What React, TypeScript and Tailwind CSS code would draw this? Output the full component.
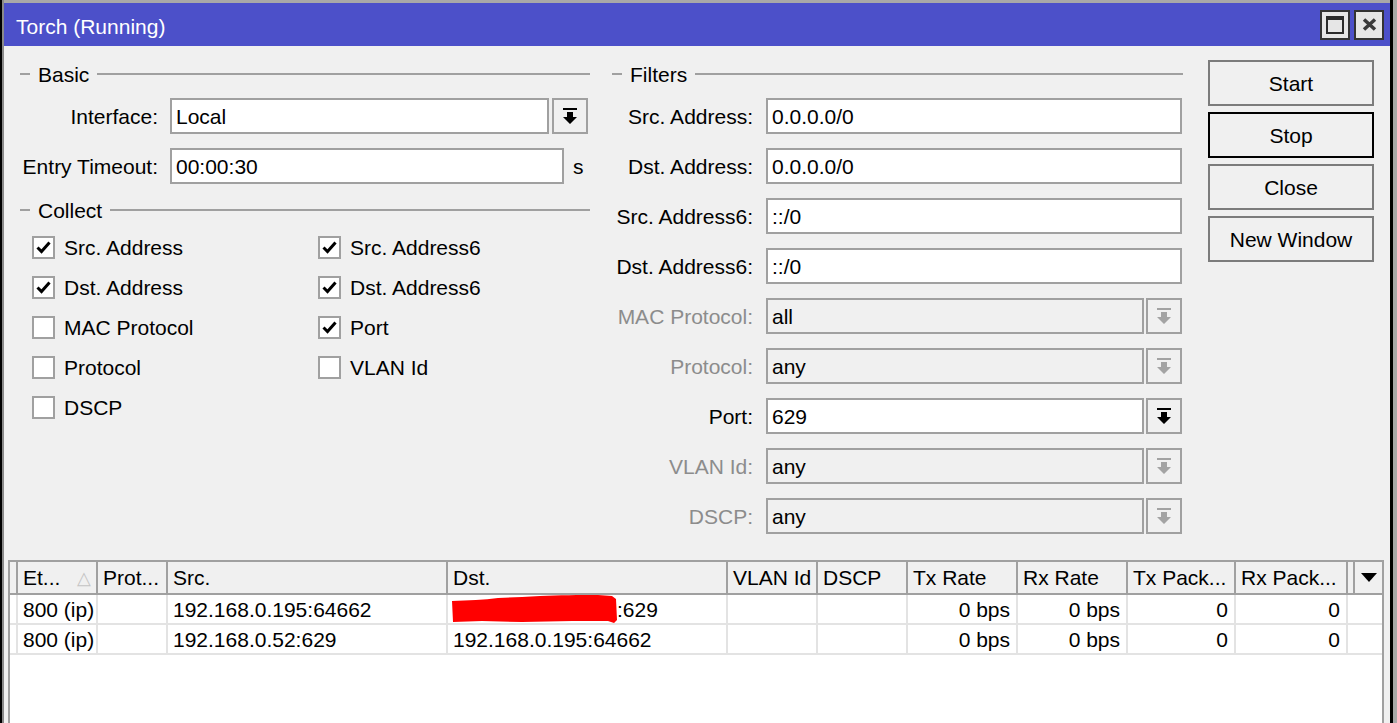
import type { ReactNode } from 'react'

function DropIcon({ color }: { color: string }) {
  return (
    <svg width="14" height="17" viewBox="0 0 14 17" fill={color}>
      <rect x="0" y="0" width="14" height="2" />
      <path d="M4 4H10V9H14L7 16L0 9H4Z" />
    </svg>
  )
}

function DropButton({ disabled }: { disabled?: boolean }) {
  return (
    <div className="flex h-[36px] w-[36px] shrink-0 items-center justify-center border-2 border-[#a0a0a0] bg-[#f0f0f0]">
      <DropIcon color={disabled ? '#a3a3a3' : '#000000'} />
    </div>
  )
}

function GroupHeader({ title, className }: { title: string; className?: string }) {
  return (
    <div className={`flex h-[24px] shrink-0 items-center ${className ?? ''}`}>
      <div className="h-[2px] w-[10px] bg-[#a0a0a0]" />
      <span className="px-[8px] leading-none">{title}</span>
      <div className="h-[2px] flex-1 bg-[#a0a0a0]" />
    </div>
  )
}

function TextBox({ value, width, disabled }: { value: string; width: string; disabled?: boolean }) {
  return (
    <div
      className={`flex h-[36px] items-center border-2 border-[#a0a0a0] pl-[4px] ${width} ${
        disabled ? 'bg-[#f0f0f0]' : 'bg-white'
      }`}
    >
      {value}
    </div>
  )
}

type Filter = { label: string; value: string; drop?: boolean; disabled?: boolean }

const filters: Filter[] = [
  { label: 'Src. Address:', value: '0.0.0.0/0' },
  { label: 'Dst. Address:', value: '0.0.0.0/0' },
  { label: 'Src. Address6:', value: '::/0' },
  { label: 'Dst. Address6:', value: '::/0' },
  { label: 'MAC Protocol:', value: 'all', drop: true, disabled: true },
  { label: 'Protocol:', value: 'any', drop: true, disabled: true },
  { label: 'Port:', value: '629', drop: true },
  { label: 'VLAN Id:', value: 'any', drop: true, disabled: true },
  { label: 'DSCP:', value: 'any', drop: true, disabled: true },
]

function CheckBox({ label, checked }: { label: string; checked?: boolean }) {
  return (
    <div className="flex h-[40px] items-center">
      <div className="flex h-[23px] w-[23px] items-center justify-center border-2 border-[#a0a0a0] bg-white">
        {checked && (
          <svg width="15" height="13" viewBox="0 0 15 13">
            <path d="M1.5 6.5L5.5 10.5L13.5 1.5" fill="none" stroke="#000" strokeWidth="3" />
          </svg>
        )}
      </div>
      <span className="ml-[9px]">{label}</span>
    </div>
  )
}

function WinButton({ label, focused }: { label: string; focused?: boolean }) {
  return (
    <div
      className={`flex h-[46px] w-[166px] items-center justify-center border-2 bg-[#f0f0f0] ${
        focused ? 'border-black' : 'border-[#7c7c7c]'
      }`}
    >
      {label}
    </div>
  )
}

function HeadCell({ w, children }: { w: string; children?: ReactNode }) {
  return (
    <div className={`flex h-full shrink-0 items-center overflow-hidden whitespace-nowrap border-r-2 border-[#a0a0a0] pl-[5px] ${w}`}>
      {children}
    </div>
  )
}

function Cell({ w, right, children }: { w: string; right?: boolean; children?: ReactNode }) {
  return (
    <div
      className={`flex h-full shrink-0 items-center whitespace-nowrap border-r-2 border-[#e3e3e3] ${w} ${
        right ? 'justify-end pr-[6px]' : 'pl-[5px]'
      }`}
    >
      {children}
    </div>
  )
}

// hand-drawn red marker over the hidden address
function Scribble() {
  return (
    <svg width="165" height="28" viewBox="0 0 165 28" className="-ml-[1px] block h-[28px] w-[165px] shrink-0">
      <path
        d="M0 6C16 5 32 5 46 3L70 2L88 1C106 0 128 0 146 0L160 1L164 4L165 25L162 28L156 26L120 26L70 27L30 26L1 27Z"
        fill="#ff0000"
      />
    </svg>
  )
}

type Row = { src: string; dst: ReactNode }

const rows: Row[] = [
  {
    src: '192.168.0.195:64662',
    dst: (
      <>
        <Scribble />
        <span>:629</span>
      </>
    ),
  },
  { src: '192.168.0.52:629', dst: '192.168.0.195:64662' },
]

export default function App() {
  return (
    <div className="flex h-[723px] w-[1397px] overflow-hidden bg-[#a8a8a8] font-['Liberation_Sans',Arial,sans-serif] text-[21px] leading-none text-black">
      <div className="h-full w-[2px] bg-black" />
      <div className="h-full w-[2px] bg-[#8a8a8a]" />
      <div className="mt-[3px] flex w-[1386px] flex-col bg-[#f0f0f0]">
        {/* title bar */}
        <div className="flex h-[43px] shrink-0 items-center bg-[#4c50c9] pl-[12px] pr-[6px]">
          <span className="flex-1 pt-[3px] text-white">Torch (Running)</span>
          <div className="flex h-[30px] w-[30px] items-center justify-center border-2 border-[#333] bg-[#e6e6e6]">
            <svg width="18" height="18" viewBox="0 0 18 18">
              <rect x="1" y="2" width="16" height="15" fill="none" stroke="#2b2b2b" strokeWidth="2" />
              <rect x="0" y="0" width="18" height="4" fill="#2b2b2b" />
            </svg>
          </div>
          <div className="ml-[4px] flex h-[30px] w-[30px] items-center justify-center border-2 border-[#333] bg-[#e6e6e6]">
            <svg width="15" height="13" viewBox="0 0 15 13">
              <path d="M2 1.5L13 11.5M13 1.5L2 11.5" stroke="#3a3a3a" strokeWidth="3.5" />
            </svg>
          </div>
        </div>

        {/* settings */}
        <div className="flex shrink-0 pl-[16px] pt-[14px]">
          <div className="flex w-[570px] flex-col pt-[2px]">
            <GroupHeader title="Basic" />
            <div className="mt-[12px] flex h-[36px] items-center">
              <div className="w-[138px] text-right">Interface:</div>
              <div className="ml-[12px]">
                <TextBox value="Local" width="w-[379px]" />
              </div>
              <div className="ml-[3px]">
                <DropButton />
              </div>
            </div>
            <div className="mt-[14px] flex h-[36px] items-center">
              <div className="w-[138px] text-right">Entry Timeout:</div>
              <div className="ml-[12px]">
                <TextBox value="00:00:30" width="w-[394px]" />
              </div>
              <span className="ml-[9px]">s</span>
            </div>
            <GroupHeader title="Collect" className="mt-[14px]" />
            <div className="mt-[5px] grid grid-cols-[286px_1fr] pl-[12px]">
              <CheckBox label="Src. Address" checked />
              <CheckBox label="Src. Address6" checked />
              <CheckBox label="Dst. Address" checked />
              <CheckBox label="Dst. Address6" checked />
              <CheckBox label="MAC Protocol" />
              <CheckBox label="Port" checked />
              <CheckBox label="Protocol" />
              <CheckBox label="VLAN Id" />
              <CheckBox label="DSCP" />
            </div>
          </div>

          <div className="ml-[22px] flex w-[571px] flex-col gap-[14px] pt-[2px]">
            <GroupHeader title="Filters" className="-mb-[2px]" />
            {filters.map((f) => (
              <div key={f.label} className="flex h-[36px] shrink-0 items-center">
                <div className={`w-[141px] text-right ${f.disabled ? 'text-[#8c8c8c]' : ''}`}>{f.label}</div>
                <div className="ml-[13px]">
                  <TextBox value={f.value} width={f.drop ? 'w-[378px]' : 'w-[416px]'} disabled={f.disabled} />
                </div>
                {f.drop && (
                  <div className="ml-[2px]">
                    <DropButton disabled={f.disabled} />
                  </div>
                )}
              </div>
            ))}
          </div>

          <div className="ml-[25px] flex flex-col gap-[6px]">
            <WinButton label="Start" />
            <WinButton label="Stop" focused />
            <WinButton label="Close" />
            <WinButton label="New Window" />
          </div>
        </div>

        {/* connection list */}
        <div className="ml-[4px] mt-[26px] flex h-[200px] w-[1376px] shrink-0 flex-col border-2 border-[#a0a0a0] bg-white">
          <div className="flex h-[33px] shrink-0 border-b-2 border-[#a0a0a0] bg-[#f0f0f0]">
            <HeadCell w="w-[8px]" />
            <div className="flex h-full w-[80px] shrink-0 items-center justify-between border-r-2 border-[#a0a0a0] pl-[5px] pr-[5px]">
              <span>Et...</span>
              <span className="text-[18px] text-[#c4c4c4]">△</span>
            </div>
            <HeadCell w="w-[70px]">Prot...</HeadCell>
            <HeadCell w="w-[280px]">Src.</HeadCell>
            <HeadCell w="w-[280px]">Dst.</HeadCell>
            <HeadCell w="w-[90px]">VLAN Id</HeadCell>
            <HeadCell w="w-[90px]">DSCP</HeadCell>
            <HeadCell w="w-[110px]">Tx Rate</HeadCell>
            <HeadCell w="w-[110px]">Rx Rate</HeadCell>
            <HeadCell w="w-[108px]">Tx Pack...</HeadCell>
            <HeadCell w="w-[112px]">Rx Pack...</HeadCell>
            <HeadCell w="w-[6px]" />
            <div className="flex flex-1 items-center justify-center">
              <svg width="16" height="9" viewBox="0 0 16 9">
                <path d="M0 0H16L8 9Z" fill="#000" />
              </svg>
            </div>
          </div>
          {rows.map((r) => (
            <div key={r.src} className="flex h-[30px] shrink-0 border-b-2 border-[#e3e3e3]">
              <Cell w="w-[8px]" />
              <Cell w="w-[80px]">800 (ip)</Cell>
              <Cell w="w-[70px]" />
              <Cell w="w-[280px]">{r.src}</Cell>
              <Cell w="w-[280px]">{r.dst}</Cell>
              <Cell w="w-[90px]" />
              <Cell w="w-[90px]" />
              <Cell w="w-[110px]" right>
                0 bps
              </Cell>
              <Cell w="w-[110px]" right>
                0 bps
              </Cell>
              <Cell w="w-[108px]" right>
                0
              </Cell>
              <Cell w="w-[112px]" right>
                0
              </Cell>
            </div>
          ))}
        </div>
      </div>
      <div className="h-full w-[3px] bg-black" />
    </div>
  )
}
